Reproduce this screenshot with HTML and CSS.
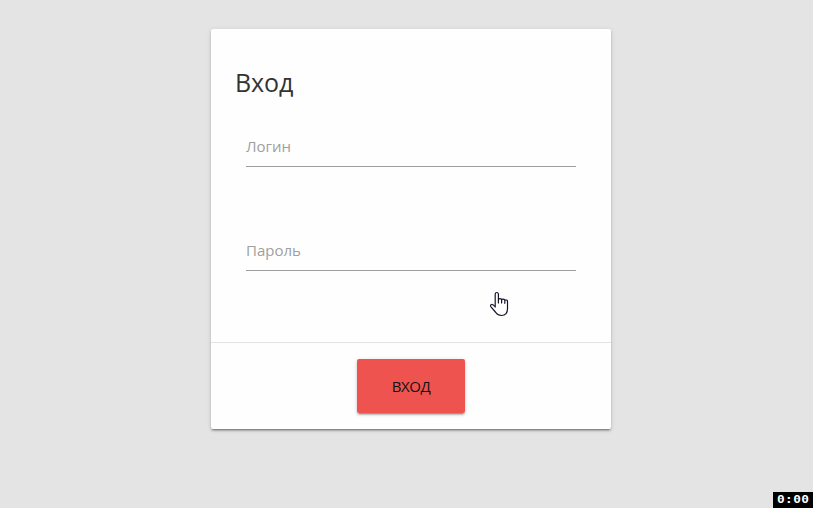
FILE: index.html
```html
<!DOCTYPE html>
<html lang="ru">
<head>
<meta charset="utf-8">
<title>Вход</title>
<link rel="stylesheet" href="styles.css">
</head>
<body>
<form class="card">
  <div class="card-content">
    <h1 class="card-title">Вход</h1>
    <input class="field" type="text" placeholder="Логин">
    <input class="field" type="password" placeholder="Пароль">
  </div>
  <div class="card-action"><button class="btn" type="button">ВХОД</button></div>
</form>
<svg class="cursor" viewBox="0 0 20 26" width="20" height="26" aria-hidden="true">
  <path d="M6.2 16V3.5Q6.2 1.5 7.8 1.5T9.4 3.5V12V8.3Q11 7 12.6 8.3V12V8.7Q14.2 7.5 15.8 8.8V12.3V9.3Q18.5 8.3 18.5 10.5V17.5Q18.5 24.5 12.5 24.5Q8.8 24.5 6.8 21.5L1.8 15.6Q1 14 2.5 13.5Q3.8 13 6.2 16Z"/>
</svg>
<div class="timer"><span class="timer-text">0:00</span></div>
</body>
</html>
```
FILE: styles.css
```css
* { box-sizing: border-box; }
body {
  margin: 0;
  height: 508px;
  padding: 29px 0 0 211px;
  overflow: hidden;
  background: #e4e4e4;
  font-family: "Open Sans", sans-serif;
}
.card {
  display: flex;
  flex-direction: column;
  width: 400px;
  height: 400px;
  background: #fefefe;
  border-radius: 2px;
  box-shadow: 0 2px 2px 0 rgba(0,0,0,.2), 0 1px 5px 0 rgba(0,0,0,.12), 0 3px 1px -2px rgba(0,0,0,.2);
}
.card-content {
  display: flex;
  flex-direction: column;
  height: 313px;
  padding: 35px 35px 0;
}
.card-title {
  margin: 0 0 23px -11px;
  font-size: 25px;
  line-height: 36px;
  font-weight: 400;
  letter-spacing: -.1px;
  color: #333;
}
.field {
  width: 330px;
  height: 44px;
  margin: 0 0 60px;
  padding: 2px 0 0;
  border: 0;
  border-bottom: 1px solid #9e9e9e;
  outline: 0;
  background: transparent;
  font: 15px "Open Sans", sans-serif;
}
.field::placeholder { color: #a0a0a0; opacity: 1; }
.card-action {
  display: flex;
  justify-content: center;
  height: 87px;
  padding-top: 16px;
  border-top: 1px solid #e4e4e4;
}
.btn {
  width: 108px;
  height: 54px;
  padding: 0;
  border: 0;
  border-radius: 2px;
  background: #ef5350;
  color: #111;
  font: 15px "Open Sans", sans-serif;
  letter-spacing: -.4px;
  box-shadow: 0 2px 2px 0 rgba(0,0,0,.2), 0 1px 5px 0 rgba(0,0,0,.12), 0 3px 1px -2px rgba(0,0,0,.2);
}
.cursor {
  position: absolute;
  left: 489px;
  top: 291px;
  fill: #fff;
  stroke: #15152a;
  stroke-width: 1.2;
  stroke-linejoin: round;
}
.timer {
  position: absolute;
  right: 0;
  bottom: 0;
  width: 40px;
  height: 16px;
  padding-left: 4px;
  background: #000;
  color: #fff;
  font: bold 10px/15px "DejaVu Sans Mono", monospace;
}
.timer-text {
  display: inline-block;
  letter-spacing: .3px;
  transform: scaleX(1.28);
  transform-origin: left;
}
```
